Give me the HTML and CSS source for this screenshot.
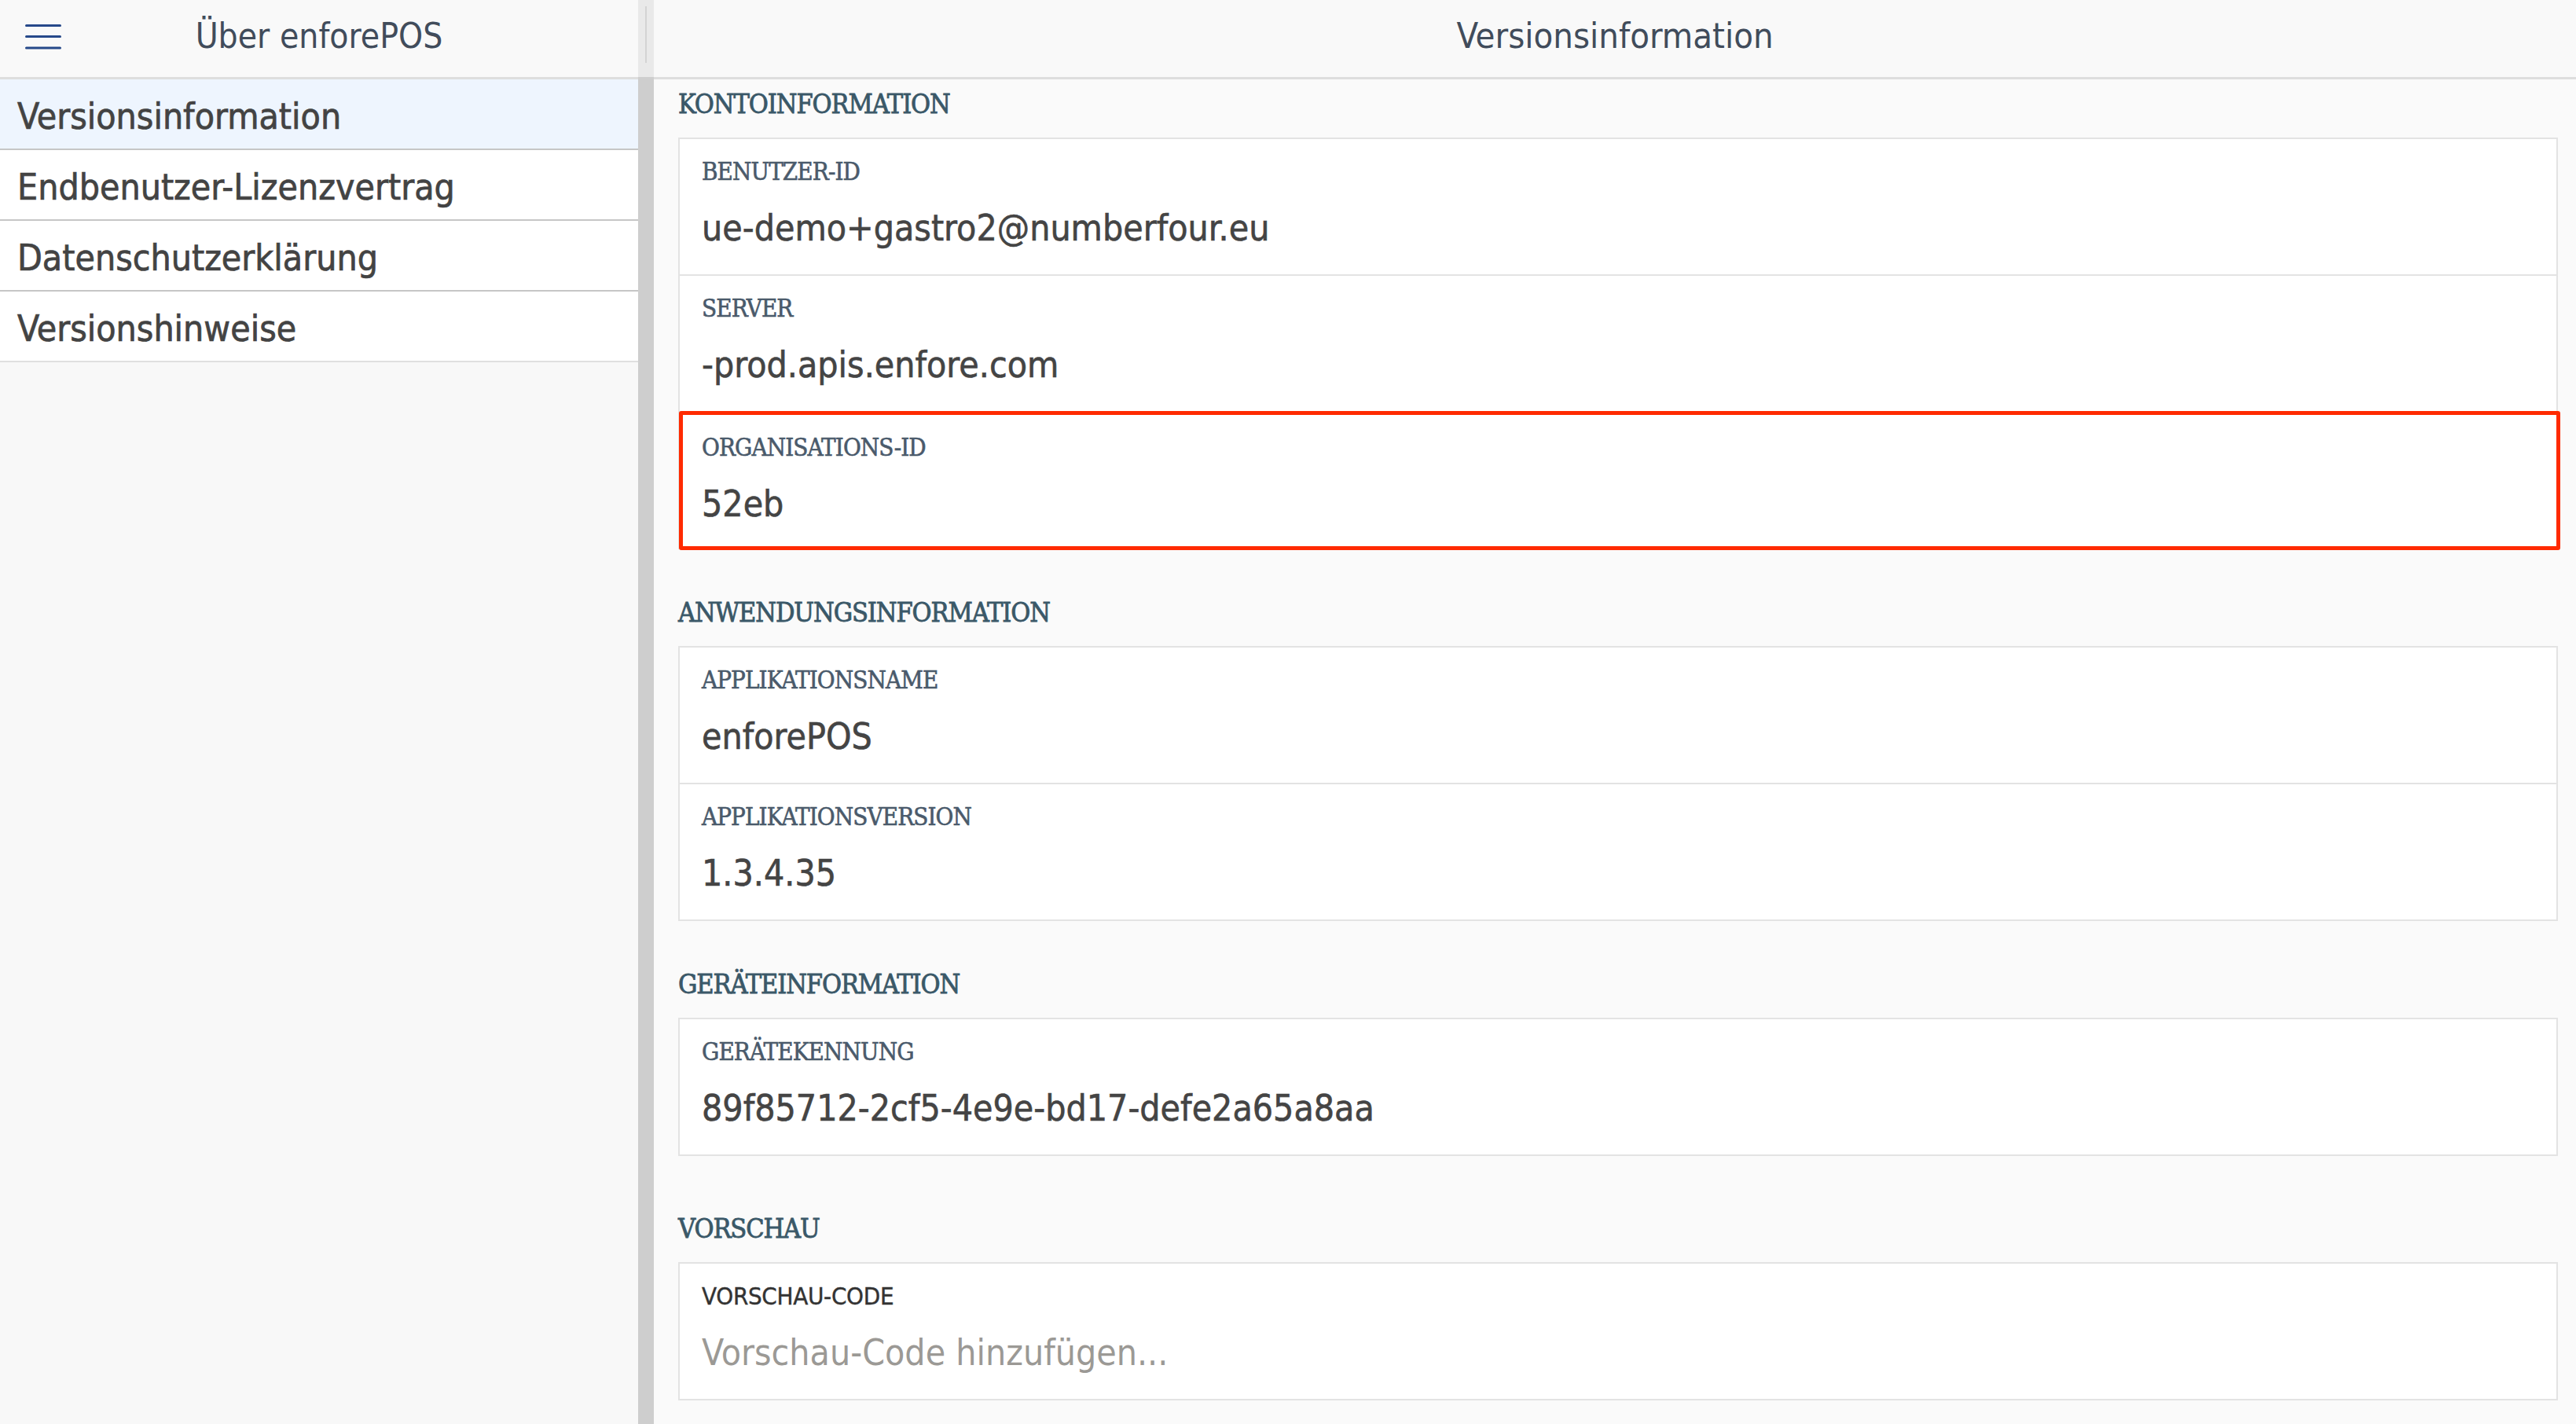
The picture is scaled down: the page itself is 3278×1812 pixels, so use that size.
FILE: index.html
```html
<!DOCTYPE html>
<html lang="de">
<head>
<meta charset="utf-8">
<title>Versionsinformation</title>
<link rel="stylesheet" href="styles.css">
</head>
<body>
<div class="app">
  <aside class="sidebar">
    <header class="bar sidebar-bar">
      <button class="menu" aria-label="Menü">
        <svg width="46" height="32" viewBox="0 0 46 32"><path d="M1.5 1.5H44.5M1.5 15.5H44.5M1.5 30H44.5" stroke="#26498a" stroke-width="3" stroke-linecap="round" fill="none"/></svg>
      </button>
      <h1 class="bar-title">Über enforePOS</h1>
    </header>
    <nav class="nav">
      <a class="nav-item active">Versionsinformation</a>
      <a class="nav-item">Endbenutzer-Lizenzvertrag</a>
      <a class="nav-item">Datenschutzerklärung</a>
      <a class="nav-item last">Versionshinweise</a>
    </nav>
  </aside>
  <div class="splitter"><div class="splitter-top"><span class="grip"></span></div></div>
  <main class="main">
    <header class="bar">
      <h1 class="bar-title">Versionsinformation</h1>
    </header>
    <div class="scroll">
      <section class="section first">
        <h2 class="section-title">KONTOINFORMATION</h2>
        <div class="card">
          <div class="field">
            <div class="field-label">BENUTZER-ID</div>
            <div class="field-value">ue-demo+gastro2@numberfour.eu</div>
          </div>
          <div class="field">
            <div class="field-label">SERVER</div>
            <div class="field-value">-prod.apis.enfore.com</div>
          </div>
          <div class="field highlight">
            <div class="field-label">ORGANISATIONS-ID</div>
            <div class="field-value">52eb</div>
          </div>
        </div>
      </section>
      <section class="section">
        <h2 class="section-title">ANWENDUNGSINFORMATION</h2>
        <div class="card">
          <div class="field">
            <div class="field-label">APPLIKATIONSNAME</div>
            <div class="field-value">enforePOS</div>
          </div>
          <div class="field">
            <div class="field-label">APPLIKATIONSVERSION</div>
            <div class="field-value">1.3.4.35</div>
          </div>
        </div>
      </section>
      <section class="section">
        <h2 class="section-title">GERÄTEINFORMATION</h2>
        <div class="card">
          <div class="field">
            <div class="field-label">GERÄTEKENNUNG</div>
            <div class="field-value">89f85712-2cf5-4e9e-bd17-defe2a65a8aa</div>
          </div>
        </div>
      </section>
      <section class="section last">
        <h2 class="section-title">VORSCHAU</h2>
        <div class="card">
          <div class="field">
            <div class="field-label input-label">VORSCHAU-CODE</div>
            <div class="field-value placeholder">Vorschau-Code hinzufügen...</div>
          </div>
        </div>
      </section>
    </div>
  </main>
</div>
</body>
</html>
```

FILE: styles.css
```css
* {
  box-sizing: border-box;
}

html, body {
  margin: 0;
  padding: 0;
  height: 100%;
}

body {
  background: #fafafa;
  font-family: "DejaVu Sans Condensed", "DejaVu Sans", sans-serif;
  font-stretch: condensed;
  color: #444;
  overflow: hidden;
}

.app {
  display: grid;
  grid-template-columns: 812px 20px 1fr;
  height: 100vh;
}

/* top bars */
.bar {
  height: 101px;
  background: #f9f9f9;
  border-bottom: 3px solid #dedede;
  display: flex;
  align-items: center;
  justify-content: center;
  padding-bottom: 6px;
}

.bar-title {
  margin: 0;
  font-size: 45px;
  font-weight: normal;
  line-height: 50px;
  color: #414c5b;
}

.sidebar-bar {
  display: grid;
  grid-template-columns: 1fr auto 1fr;
  align-items: center;
}

.menu {
  justify-self: start;
  margin-left: 32px;
  margin-top: 2px;
  padding: 0;
  border: 0;
  background: none;
  width: 46px;
  height: 32px;
  display: flex;
}

.sidebar-bar .bar-title {
  font-size: 44px;
}

/* sidebar */
.sidebar {
  background: #f8f8f8;
  display: flex;
  flex-direction: column;
}

.nav {
  display: flex;
  flex-direction: column;
}

.nav-item {
  height: 90px;
  display: flex;
  align-items: center;
  padding-left: 22px;
  padding-top: 5px;
  background: #fff;
  border-bottom: 2px solid #c6c6c6;
  font-size: 46px;
  color: #434343;
  -webkit-text-stroke: 0.7px #434343;
  text-decoration: none;
}

.nav-item.active {
  background: #eef5fe;
}

.nav-item.last {
  border-bottom-color: #e0e0e0;
}

/* splitter */
.splitter {
  background: #cecece;
  display: flex;
  flex-direction: column;
}

.splitter-top {
  height: 98px;
  background: #e9e9e9;
  display: flex;
  justify-content: center;
  padding-top: 8px;
}

.grip {
  width: 2px;
  height: 72px;
  background: #d3d3d3;
}

/* main */
.main {
  display: flex;
  flex-direction: column;
  min-width: 0;
  background: #fafafa;
}

.scroll {
  flex: 1;
  overflow: hidden;
  padding: 14px 23px 0 31px;
}

.section {
  margin-top: 63px;
}

.section.first {
  margin-top: 0;
}

.section.last {
  margin-top: 75px;
}

.section-title {
  margin: 0 0 26px;
  font-family: "DejaVu Serif Condensed", "DejaVu Serif", serif;
  font-stretch: condensed;
  font-weight: normal;
  font-size: 34px;
  line-height: 34px;
  letter-spacing: -1.1px;
  color: #3a5868;
  -webkit-text-stroke: 0.8px #3a5868;
}

.card {
  background: #fff;
  border: 2px solid #e3e3e3;
}

.field {
  position: relative;
  padding: 26px 0 36px 28px;
  border-top: 2px solid #e3e3e3;
}

.field:first-child {
  border-top: 0;
}

.field-label {
  font-family: "DejaVu Serif Condensed", "DejaVu Serif", serif;
  font-stretch: condensed;
  font-size: 31px;
  line-height: 31px;
  letter-spacing: -0.9px;
  color: #4a5a6b;
  -webkit-text-stroke: 0.6px #4a5a6b;
}

.field-label.input-label {
  font-family: "DejaVu Sans Condensed", "DejaVu Sans", sans-serif;
  color: #333;
  font-size: 31px;
  letter-spacing: -0.3px;
  -webkit-text-stroke: 0.4px #333;
}

.field-value {
  margin-top: 33px;
  font-size: 46px;
  line-height: 46px;
  color: #444;
  -webkit-text-stroke: 0.6px #444;
}

.field-value.placeholder {
  color: #9b9995;
  -webkit-text-stroke: 0;
}

.field.highlight {
  padding-top: 29px;
  padding-bottom: 33px;
}

.highlight::after {
  content: "";
  position: absolute;
  top: -2px;
  left: -1px;
  right: -5px;
  bottom: -3px;
  border: 5px solid #ff2a00;
  border-radius: 3px;
  pointer-events: none;
}
```
